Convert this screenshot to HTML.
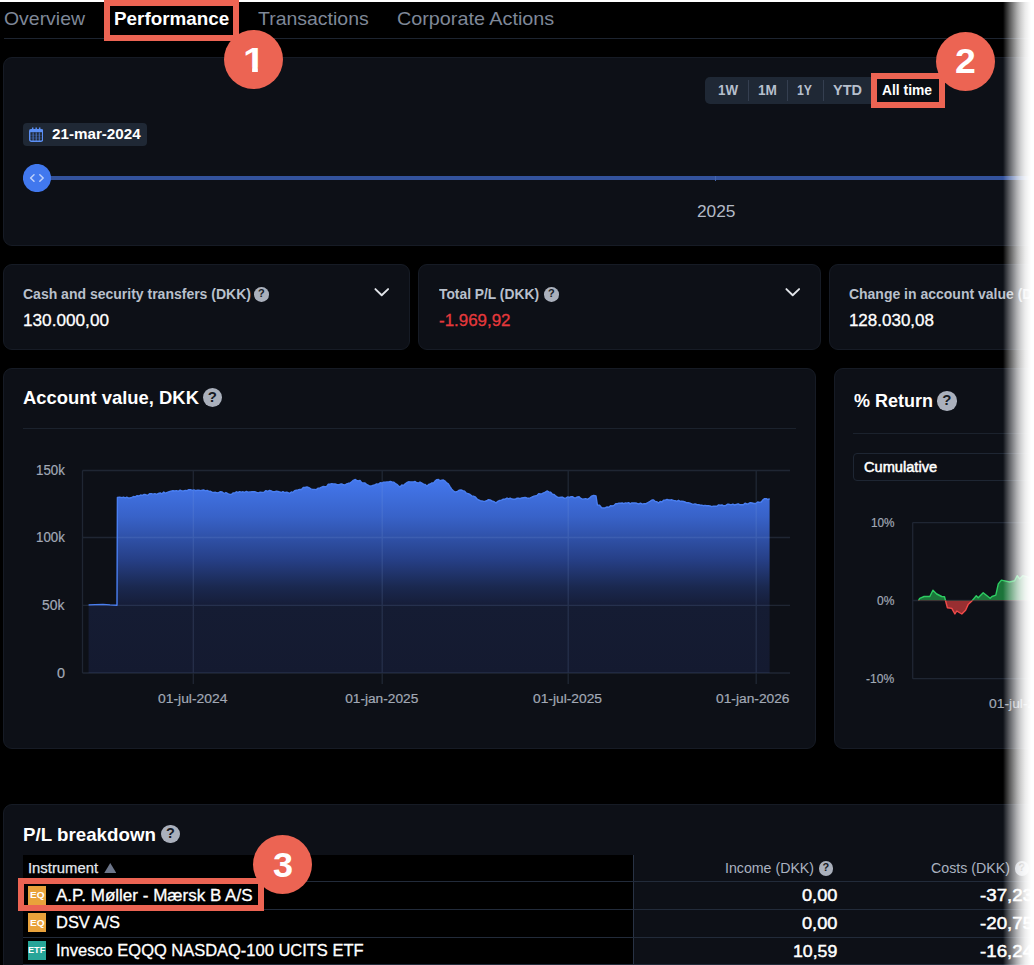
<!DOCTYPE html>
<html lang="en"><head><meta charset="utf-8"><title>Performance</title>
<style>
html,body{margin:0;padding:0;background:#000;}
body{width:1034px;height:965px;position:relative;overflow:hidden;font-family:"Liberation Sans",Arial,sans-serif;}
.t{position:absolute;white-space:nowrap;transform-origin:0 50%;}
.card{position:absolute;background:#0d1017;border:1px solid #161b25;border-radius:9px;box-sizing:border-box;}
.help{position:absolute;border-radius:50%;text-align:center;font-weight:700;}
.abs{position:absolute;}
.rbox{position:absolute;border:6px solid #ec6453;box-sizing:border-box;}
.num{position:absolute;border-radius:50%;background:#ec6453;}
.hl{position:absolute;height:1px;background:#1f2734;}
.vl{position:absolute;width:1px;background:#1f2734;}
</style></head><body>

<div class="abs" style="left:0;top:0;width:1034px;height:2px;background:#fff"></div>
<div class="abs" style="left:4px;top:38px;width:1030px;height:1px;background:#1d2430"></div>
<div class="t" style="left:4.00px;top:8.00px;font-size:19px;line-height:21px;color:#7f8898;transform:scaleX(1.0229);">Overview</div>
<div class="t" style="left:258.00px;top:8.00px;font-size:19px;line-height:21px;color:#7f8898;transform:scaleX(1.0244);">Transactions</div>
<div class="t" style="left:397.00px;top:8.00px;font-size:19px;line-height:21px;color:#7f8898;transform:scaleX(1.0408);">Corporate Actions</div>
<div class="card" style="left:3px;top:57px;width:1060px;height:189px"></div>
<div class="abs" style="left:704.6px;top:76.7px;width:236px;height:27.5px;border-radius:5px;background:#1f2835"></div>
<div class="abs" style="left:747.5px;top:80.2px;width:1px;height:20.6px;background:#353f50"></div>
<div class="abs" style="left:787.0px;top:80.2px;width:1px;height:20.6px;background:#353f50"></div>
<div class="abs" style="left:822.5px;top:80.2px;width:1px;height:20.6px;background:#353f50"></div>
<div class="t" style="left:717.50px;top:82.20px;font-size:14px;line-height:16px;color:#b6bfcc;font-weight:700;transform:scaleX(0.9524);">1W</div>
<div class="t" style="left:758.00px;top:82.20px;font-size:14px;line-height:16px;color:#b6bfcc;font-weight:700;transform:scaleX(0.9769);">1M</div>
<div class="t" style="left:797.00px;top:82.20px;font-size:14px;line-height:16px;color:#b6bfcc;font-weight:700;transform:scaleX(0.8759);">1Y</div>
<div class="t" style="left:833.00px;top:82.20px;font-size:14px;line-height:16px;color:#b6bfcc;font-weight:700;transform:scaleX(1.0357);">YTD</div>
<div class="abs" style="left:23px;top:122.5px;width:123.5px;height:23.5px;border-radius:4px;background:#1f2835"></div>
<svg class="abs" style="left:28.7px;top:126.8px" width="14.4" height="15" viewBox="0 0 14.4 15"><rect x="0.7" y="2.6" width="13" height="11.6" rx="1.6" fill="none" stroke="#5b8ff5" stroke-width="1.4"/><rect x="0.7" y="2.6" width="13" height="2.6" fill="#5b8ff5"/><path d="M3.7 0.4v3M7.2 0.4v3M10.7 0.4v3" stroke="#5b8ff5" stroke-width="1.5"/><path d="M4.1 5.5v8.4M7.2 5.5v8.4M10.3 5.5v8.4" stroke="#5b8ff5" stroke-width="1" opacity=".75"/><path d="M1 8.2h12.4M1 11h12.4" stroke="#5b8ff5" stroke-width="0.8" opacity=".35"/></svg>
<div class="t" style="left:52.00px;top:126.00px;font-size:14.6px;line-height:16px;color:#fff;font-weight:700;transform:scaleX(1.0407);">21-mar-2024</div>
<div class="abs" style="left:37px;top:175.7px;width:1000px;height:4.6px;background:#33529c"></div>
<div class="abs" style="left:715px;top:176px;width:1px;height:4.5px;background:#4464ad"></div>
<svg class="abs" style="left:23px;top:164px" width="28" height="28" viewBox="0 0 28 28"><circle cx="14" cy="14" r="14.1" fill="#4178ee"/><path d="M11 10.7 7.6 14 11 17.3M16.8 10.7 20.2 14 16.8 17.3" fill="none" stroke="#bdd0fa" stroke-width="1.5" stroke-linecap="round" stroke-linejoin="round"/></svg>
<div class="t" style="left:696.50px;top:203.00px;font-size:16px;line-height:17px;color:#b4bac6;transform:scaleX(1.0816);">2025</div>
<div class="card" style="left:3px;top:264px;width:407px;height:86px"></div>
<div class="card" style="left:418px;top:264px;width:403px;height:86px"></div>
<div class="card" style="left:829px;top:264px;width:240px;height:86px"></div>
<div class="t" style="left:23.00px;top:286.00px;font-size:14px;line-height:16px;color:#b9c0cc;font-weight:700;">Cash and security transfers (DKK)</div>
<div class="help" style="left:254.20px;top:287.00px;width:14.6px;height:14.6px;line-height:13.9px;font-size:11px;background:#aab0bc;color:#161a22">?</div>
<div class="t" style="left:23.00px;top:310.50px;font-size:17px;line-height:19px;color:#fff;transform:scaleX(1.0108);-webkit-text-stroke:0.3px #fff;">130.000,00</div>
<div class="t" style="left:439.20px;top:286.00px;font-size:14px;line-height:16px;color:#b9c0cc;font-weight:700;transform:scaleX(0.9865);">Total P/L (DKK)</div>
<div class="help" style="left:544.00px;top:287.00px;width:14.6px;height:14.6px;line-height:13.9px;font-size:11px;background:#aab0bc;color:#161a22">?</div>
<div class="t" style="left:439.00px;top:310.50px;font-size:17px;line-height:19px;color:#e5393c;transform:scaleX(0.9953);-webkit-text-stroke:0.3px #e5393c;">-1.969,92</div>
<div class="t" style="left:848.90px;top:286.00px;font-size:14px;line-height:16px;color:#b9c0cc;font-weight:700;">Change in account value (DKK)</div>
<div class="t" style="left:848.90px;top:310.50px;font-size:17px;line-height:19px;color:#fff;-webkit-text-stroke:0.3px #fff;">128.030,08</div>
<svg class="abs" style="left:373px;top:286px" width="18" height="13" viewBox="0 0 18 13"><path d="M2.4 3.1 8.7 9.3 15.1 3.1" fill="none" stroke="#e1e4e9" stroke-width="1.9" stroke-linecap="round" stroke-linejoin="round"/></svg>
<svg class="abs" style="left:783.8px;top:286px" width="18" height="13" viewBox="0 0 18 13"><path d="M2.4 3.1 8.7 9.3 15.1 3.1" fill="none" stroke="#e1e4e9" stroke-width="1.9" stroke-linecap="round" stroke-linejoin="round"/></svg>
<div class="card" style="left:3px;top:368px;width:812.6px;height:380.6px"></div>
<div class="t" style="left:23.00px;top:387.20px;font-size:18.6px;line-height:21px;color:#fff;font-weight:700;transform:scaleX(0.9901);">Account value, DKK</div>
<div class="help" style="left:202.50px;top:387.80px;width:19.6px;height:19.6px;line-height:18.0px;font-size:15px;background:#aab0bc;color:#161a22">?</div>
<div class="hl" style="left:23px;top:428px;width:773px;background:#1b222d"></div>
<svg class="abs" style="left:0;top:440px" width="830" height="280" viewBox="0 440 830 280">
<defs><linearGradient id="ag" gradientUnits="userSpaceOnUse" x1="0" y1="478" x2="0" y2="673"><stop offset="0" stop-color="#4478ee"/><stop offset="0.2" stop-color="#3862c8"/><stop offset="0.42" stop-color="#263f86"/><stop offset="0.56" stop-color="#1a284f"/><stop offset="0.645" stop-color="#161e3a"/><stop offset="0.66" stop-color="#151c33"/><stop offset="1" stop-color="#141a30"/></linearGradient></defs>
<path d="M88.6 604.9 L95.0 604.6 L103.0 604.4 L110.0 604.9 L117.0 605.2 L117.4 497.4 L119.7 497.2 L122.0 497.6 L123.6 497.1 L125.2 498.0 L126.8 497.1 L128.4 498.0 L130.0 498.0 L131.8 497.4 L133.5 496.5 L135.3 496.9 L137.1 495.7 L138.9 496.0 L140.6 495.0 L142.4 495.4 L144.2 494.4 L146.0 494.8 L147.8 495.3 L149.5 493.8 L151.3 493.7 L153.1 494.2 L154.9 493.7 L156.7 494.3 L158.4 493.5 L160.2 493.0 L162.0 493.8 L163.8 492.0 L165.5 493.2 L167.3 492.4 L169.2 491.7 L171.1 491.1 L172.9 490.7 L174.8 491.0 L176.6 490.6 L178.3 491.4 L180.1 490.2 L181.8 490.9 L183.6 491.0 L185.3 490.4 L187.1 490.7 L188.8 489.7 L190.6 489.7 L192.3 490.4 L194.0 489.9 L195.6 490.7 L197.3 490.3 L198.9 490.1 L200.6 490.6 L202.2 490.3 L203.9 490.0 L205.5 490.9 L207.2 490.4 L208.9 491.4 L210.5 491.3 L212.2 492.4 L213.9 492.5 L215.5 492.3 L217.2 492.9 L218.9 492.5 L220.5 491.7 L222.2 492.0 L224.1 493.5 L225.9 492.5 L227.8 493.7 L229.7 494.4 L231.4 494.4 L233.0 492.9 L234.7 493.0 L236.4 491.8 L238.0 492.5 L239.7 491.7 L241.4 492.2 L243.0 491.8 L244.7 492.4 L246.4 491.4 L248.0 492.1 L249.7 491.9 L251.4 491.8 L253.0 491.6 L254.7 491.7 L256.6 492.5 L258.4 492.9 L260.2 492.2 L262.1 492.4 L264.0 492.2 L265.9 490.6 L267.7 491.3 L269.6 490.4 L271.3 490.9 L272.9 491.8 L274.6 491.8 L276.3 491.1 L277.9 491.5 L279.6 492.0 L281.3 492.5 L282.9 491.6 L284.6 492.6 L286.3 492.3 L287.9 492.5 L289.6 493.4 L291.3 491.9 L292.9 492.5 L294.6 490.7 L296.3 490.3 L297.9 489.9 L299.6 489.4 L301.5 489.5 L303.3 487.4 L305.1 487.5 L307.0 487.0 L308.9 487.7 L310.8 488.9 L312.6 489.4 L314.5 489.4 L316.3 489.6 L318.2 488.1 L320.0 488.0 L321.7 487.2 L323.3 486.5 L325.0 486.8 L326.7 486.3 L328.3 484.2 L330.0 484.2 L331.7 483.7 L333.3 483.9 L335.0 484.0 L336.7 484.5 L338.3 484.8 L340.0 484.3 L341.7 483.9 L343.3 484.8 L345.0 485.0 L346.7 483.8 L348.3 483.3 L350.0 483.1 L351.7 481.7 L353.3 480.4 L355.0 479.5 L356.7 480.3 L358.3 481.0 L360.0 480.4 L361.7 482.6 L363.3 482.9 L365.0 483.0 L367.0 484.7 L369.0 485.7 L371.0 486.2 L372.8 485.5 L374.7 485.0 L376.5 483.9 L378.3 484.3 L380.2 482.7 L382.0 483.0 L383.7 482.1 L385.3 482.1 L387.0 481.9 L388.7 482.0 L390.3 481.4 L392.0 482.0 L393.6 482.1 L395.2 483.4 L396.8 484.3 L398.4 485.8 L400.0 487.0 L401.8 485.0 L403.5 485.4 L405.2 483.8 L407.0 482.5 L408.6 481.8 L410.2 481.9 L411.9 482.0 L413.5 482.0 L415.1 481.5 L416.8 482.8 L418.4 483.0 L420.0 482.0 L421.8 483.0 L423.5 484.1 L425.2 484.4 L427.0 486.2 L428.6 484.5 L430.3 484.0 L431.9 482.9 L433.6 483.0 L435.2 480.8 L436.9 479.6 L438.5 479.5 L440.1 480.7 L441.8 480.3 L443.4 480.0 L445.0 481.0 L446.7 482.9 L448.3 483.8 L450.0 486.6 L451.7 489.2 L453.3 490.8 L455.0 492.0 L457.0 491.7 L459.0 490.2 L461.0 490.0 L462.8 490.7 L464.6 491.2 L466.4 493.2 L468.2 493.7 L470.0 494.5 L471.7 495.9 L473.4 496.1 L475.1 496.8 L476.9 498.8 L478.6 500.0 L480.3 500.7 L482.0 501.0 L483.6 501.4 L485.2 501.2 L486.8 500.8 L488.4 499.7 L490.0 500.0 L492.0 501.0 L494.0 501.7 L496.0 503.0 L497.8 501.3 L499.7 500.5 L501.5 500.1 L503.3 499.2 L505.2 499.2 L507.0 498.0 L508.6 498.9 L510.2 498.1 L511.9 499.0 L513.5 499.2 L515.1 499.3 L516.8 498.3 L518.4 498.1 L520.0 498.7 L521.7 498.0 L523.4 497.7 L525.1 497.4 L526.9 498.0 L528.6 498.2 L530.3 497.9 L532.0 497.0 L533.7 496.3 L535.3 495.9 L537.0 495.5 L538.7 493.6 L540.3 494.0 L542.0 493.7 L543.7 492.8 L545.3 492.1 L547.0 491.0 L548.8 491.9 L550.6 492.3 L552.4 494.3 L554.1 494.4 L555.9 496.2 L557.7 497.4 L559.5 497.5 L561.2 497.3 L562.8 497.3 L564.5 498.3 L566.2 497.9 L567.8 496.9 L569.5 497.5 L571.1 496.7 L572.7 496.7 L574.3 497.9 L575.9 497.7 L577.5 497.0 L579.1 496.8 L580.8 498.4 L582.5 499.1 L584.1 498.9 L585.8 498.7 L587.4 499.4 L589.5 498.2 L591.6 496.1 L593.7 495.4 L596.0 496.0 L597.4 505.0 L599.5 505.1 L601.6 507.8 L603.7 508.0 L605.4 507.7 L607.1 507.0 L608.8 507.2 L610.5 505.7 L612.3 506.0 L614.0 505.4 L615.7 503.7 L617.4 503.7 L619.0 503.2 L620.6 503.2 L622.2 503.0 L623.8 503.6 L625.4 502.9 L627.0 503.2 L628.6 502.6 L630.2 503.9 L631.8 502.9 L633.4 503.0 L635.0 503.0 L636.8 503.3 L638.7 504.0 L640.5 503.2 L642.3 504.2 L644.2 503.6 L646.0 503.7 L648.0 502.5 L650.0 501.3 L652.0 500.0 L653.6 499.9 L655.2 501.4 L656.9 501.7 L658.5 503.0 L660.2 501.4 L661.9 502.1 L663.6 500.3 L665.3 500.1 L667.0 499.4 L668.6 500.0 L670.3 500.0 L671.9 499.8 L673.5 500.4 L675.2 500.7 L676.8 501.3 L678.5 500.3 L680.1 501.4 L681.7 501.1 L683.4 501.4 L685.0 502.0 L686.7 502.8 L688.3 502.7 L690.0 503.1 L691.7 503.8 L693.3 504.4 L695.0 503.9 L696.7 504.5 L698.3 504.7 L700.0 505.0 L701.7 505.2 L703.3 505.7 L705.0 505.4 L706.7 505.7 L708.3 505.8 L710.0 506.0 L711.7 506.7 L713.4 506.1 L715.1 506.2 L716.9 506.2 L718.6 504.9 L720.3 505.2 L722.0 505.0 L723.8 505.8 L725.6 505.6 L727.4 504.3 L729.2 504.3 L731.0 504.9 L732.8 504.2 L734.6 505.0 L736.3 504.3 L738.1 503.8 L739.8 504.7 L741.6 504.7 L743.3 504.7 L745.0 503.2 L746.8 504.0 L748.5 503.7 L750.3 502.6 L752.0 503.0 L753.9 503.5 L755.8 503.5 L757.7 502.0 L759.6 502.4 L761.3 502.0 L762.9 499.8 L764.6 498.7 L766.3 498.7 L767.9 499.6 L769.6 498.7 L769.6 673 L88.6 673 Z" fill="url(#ag)"/>
<path d="M82.5 470.5H790 M82.5 537.5H790 M82.5 605.3H790 M82.5 673H790 M82.5 470.5V673 M193.3 470.5V684 M382.2 470.5V684 M568.2 470.5V684 M756.2 470.5V684" stroke="#8fb0e6" stroke-width="1.3" fill="none" opacity="0.14"/>
<path d="M88.6 604.9 L95.0 604.6 L103.0 604.4 L110.0 604.9 L117.0 605.2 L117.4 497.4 L119.7 497.2 L122.0 497.6 L123.6 497.1 L125.2 498.0 L126.8 497.1 L128.4 498.0 L130.0 498.0 L131.8 497.4 L133.5 496.5 L135.3 496.9 L137.1 495.7 L138.9 496.0 L140.6 495.0 L142.4 495.4 L144.2 494.4 L146.0 494.8 L147.8 495.3 L149.5 493.8 L151.3 493.7 L153.1 494.2 L154.9 493.7 L156.7 494.3 L158.4 493.5 L160.2 493.0 L162.0 493.8 L163.8 492.0 L165.5 493.2 L167.3 492.4 L169.2 491.7 L171.1 491.1 L172.9 490.7 L174.8 491.0 L176.6 490.6 L178.3 491.4 L180.1 490.2 L181.8 490.9 L183.6 491.0 L185.3 490.4 L187.1 490.7 L188.8 489.7 L190.6 489.7 L192.3 490.4 L194.0 489.9 L195.6 490.7 L197.3 490.3 L198.9 490.1 L200.6 490.6 L202.2 490.3 L203.9 490.0 L205.5 490.9 L207.2 490.4 L208.9 491.4 L210.5 491.3 L212.2 492.4 L213.9 492.5 L215.5 492.3 L217.2 492.9 L218.9 492.5 L220.5 491.7 L222.2 492.0 L224.1 493.5 L225.9 492.5 L227.8 493.7 L229.7 494.4 L231.4 494.4 L233.0 492.9 L234.7 493.0 L236.4 491.8 L238.0 492.5 L239.7 491.7 L241.4 492.2 L243.0 491.8 L244.7 492.4 L246.4 491.4 L248.0 492.1 L249.7 491.9 L251.4 491.8 L253.0 491.6 L254.7 491.7 L256.6 492.5 L258.4 492.9 L260.2 492.2 L262.1 492.4 L264.0 492.2 L265.9 490.6 L267.7 491.3 L269.6 490.4 L271.3 490.9 L272.9 491.8 L274.6 491.8 L276.3 491.1 L277.9 491.5 L279.6 492.0 L281.3 492.5 L282.9 491.6 L284.6 492.6 L286.3 492.3 L287.9 492.5 L289.6 493.4 L291.3 491.9 L292.9 492.5 L294.6 490.7 L296.3 490.3 L297.9 489.9 L299.6 489.4 L301.5 489.5 L303.3 487.4 L305.1 487.5 L307.0 487.0 L308.9 487.7 L310.8 488.9 L312.6 489.4 L314.5 489.4 L316.3 489.6 L318.2 488.1 L320.0 488.0 L321.7 487.2 L323.3 486.5 L325.0 486.8 L326.7 486.3 L328.3 484.2 L330.0 484.2 L331.7 483.7 L333.3 483.9 L335.0 484.0 L336.7 484.5 L338.3 484.8 L340.0 484.3 L341.7 483.9 L343.3 484.8 L345.0 485.0 L346.7 483.8 L348.3 483.3 L350.0 483.1 L351.7 481.7 L353.3 480.4 L355.0 479.5 L356.7 480.3 L358.3 481.0 L360.0 480.4 L361.7 482.6 L363.3 482.9 L365.0 483.0 L367.0 484.7 L369.0 485.7 L371.0 486.2 L372.8 485.5 L374.7 485.0 L376.5 483.9 L378.3 484.3 L380.2 482.7 L382.0 483.0 L383.7 482.1 L385.3 482.1 L387.0 481.9 L388.7 482.0 L390.3 481.4 L392.0 482.0 L393.6 482.1 L395.2 483.4 L396.8 484.3 L398.4 485.8 L400.0 487.0 L401.8 485.0 L403.5 485.4 L405.2 483.8 L407.0 482.5 L408.6 481.8 L410.2 481.9 L411.9 482.0 L413.5 482.0 L415.1 481.5 L416.8 482.8 L418.4 483.0 L420.0 482.0 L421.8 483.0 L423.5 484.1 L425.2 484.4 L427.0 486.2 L428.6 484.5 L430.3 484.0 L431.9 482.9 L433.6 483.0 L435.2 480.8 L436.9 479.6 L438.5 479.5 L440.1 480.7 L441.8 480.3 L443.4 480.0 L445.0 481.0 L446.7 482.9 L448.3 483.8 L450.0 486.6 L451.7 489.2 L453.3 490.8 L455.0 492.0 L457.0 491.7 L459.0 490.2 L461.0 490.0 L462.8 490.7 L464.6 491.2 L466.4 493.2 L468.2 493.7 L470.0 494.5 L471.7 495.9 L473.4 496.1 L475.1 496.8 L476.9 498.8 L478.6 500.0 L480.3 500.7 L482.0 501.0 L483.6 501.4 L485.2 501.2 L486.8 500.8 L488.4 499.7 L490.0 500.0 L492.0 501.0 L494.0 501.7 L496.0 503.0 L497.8 501.3 L499.7 500.5 L501.5 500.1 L503.3 499.2 L505.2 499.2 L507.0 498.0 L508.6 498.9 L510.2 498.1 L511.9 499.0 L513.5 499.2 L515.1 499.3 L516.8 498.3 L518.4 498.1 L520.0 498.7 L521.7 498.0 L523.4 497.7 L525.1 497.4 L526.9 498.0 L528.6 498.2 L530.3 497.9 L532.0 497.0 L533.7 496.3 L535.3 495.9 L537.0 495.5 L538.7 493.6 L540.3 494.0 L542.0 493.7 L543.7 492.8 L545.3 492.1 L547.0 491.0 L548.8 491.9 L550.6 492.3 L552.4 494.3 L554.1 494.4 L555.9 496.2 L557.7 497.4 L559.5 497.5 L561.2 497.3 L562.8 497.3 L564.5 498.3 L566.2 497.9 L567.8 496.9 L569.5 497.5 L571.1 496.7 L572.7 496.7 L574.3 497.9 L575.9 497.7 L577.5 497.0 L579.1 496.8 L580.8 498.4 L582.5 499.1 L584.1 498.9 L585.8 498.7 L587.4 499.4 L589.5 498.2 L591.6 496.1 L593.7 495.4 L596.0 496.0 L597.4 505.0 L599.5 505.1 L601.6 507.8 L603.7 508.0 L605.4 507.7 L607.1 507.0 L608.8 507.2 L610.5 505.7 L612.3 506.0 L614.0 505.4 L615.7 503.7 L617.4 503.7 L619.0 503.2 L620.6 503.2 L622.2 503.0 L623.8 503.6 L625.4 502.9 L627.0 503.2 L628.6 502.6 L630.2 503.9 L631.8 502.9 L633.4 503.0 L635.0 503.0 L636.8 503.3 L638.7 504.0 L640.5 503.2 L642.3 504.2 L644.2 503.6 L646.0 503.7 L648.0 502.5 L650.0 501.3 L652.0 500.0 L653.6 499.9 L655.2 501.4 L656.9 501.7 L658.5 503.0 L660.2 501.4 L661.9 502.1 L663.6 500.3 L665.3 500.1 L667.0 499.4 L668.6 500.0 L670.3 500.0 L671.9 499.8 L673.5 500.4 L675.2 500.7 L676.8 501.3 L678.5 500.3 L680.1 501.4 L681.7 501.1 L683.4 501.4 L685.0 502.0 L686.7 502.8 L688.3 502.7 L690.0 503.1 L691.7 503.8 L693.3 504.4 L695.0 503.9 L696.7 504.5 L698.3 504.7 L700.0 505.0 L701.7 505.2 L703.3 505.7 L705.0 505.4 L706.7 505.7 L708.3 505.8 L710.0 506.0 L711.7 506.7 L713.4 506.1 L715.1 506.2 L716.9 506.2 L718.6 504.9 L720.3 505.2 L722.0 505.0 L723.8 505.8 L725.6 505.6 L727.4 504.3 L729.2 504.3 L731.0 504.9 L732.8 504.2 L734.6 505.0 L736.3 504.3 L738.1 503.8 L739.8 504.7 L741.6 504.7 L743.3 504.7 L745.0 503.2 L746.8 504.0 L748.5 503.7 L750.3 502.6 L752.0 503.0 L753.9 503.5 L755.8 503.5 L757.7 502.0 L759.6 502.4 L761.3 502.0 L762.9 499.8 L764.6 498.7 L766.3 498.7 L767.9 499.6 L769.6 498.7" fill="none" stroke="#4a7ff2" stroke-width="1.4" stroke-linejoin="round"/>
</svg>
<div class="t" style="left:35.80px;top:462.20px;font-size:14.2px;line-height:16px;color:#a2a9b6;transform:scaleX(0.9353);-webkit-text-stroke:0.2px #a2a9b6;">150k</div>
<div class="t" style="left:35.80px;top:529.20px;font-size:14.2px;line-height:16px;color:#a2a9b6;transform:scaleX(0.9353);-webkit-text-stroke:0.2px #a2a9b6;">100k</div>
<div class="t" style="left:42.20px;top:597.00px;font-size:14.2px;line-height:16px;color:#a2a9b6;transform:scaleX(0.9784);-webkit-text-stroke:0.2px #a2a9b6;">50k</div>
<div class="t" style="left:56.60px;top:664.80px;font-size:14.2px;line-height:16px;color:#a2a9b6;transform:scaleX(1.0130);-webkit-text-stroke:0.2px #a2a9b6;">0</div>
<div class="t" style="left:158.40px;top:691.00px;font-size:13.7px;line-height:15px;color:#a2a9b6;transform:scaleX(1.0139);-webkit-text-stroke:0.2px #a2a9b6;">01-jul-2024</div>
<div class="t" style="left:345.20px;top:691.00px;font-size:13.7px;line-height:15px;color:#a2a9b6;-webkit-text-stroke:0.2px #a2a9b6;">01-jan-2025</div>
<div class="t" style="left:532.80px;top:691.00px;font-size:13.7px;line-height:15px;color:#a2a9b6;transform:scaleX(1.0080);-webkit-text-stroke:0.2px #a2a9b6;">01-jul-2025</div>
<div class="t" style="left:716.40px;top:691.00px;font-size:13.7px;line-height:15px;color:#a2a9b6;transform:scaleX(1.0065);-webkit-text-stroke:0.2px #a2a9b6;">01-jan-2026</div>
<div class="card" style="left:833.5px;top:368px;width:240px;height:380.6px"></div>
<div class="t" style="left:854.00px;top:390.00px;font-size:18.6px;line-height:21px;color:#fff;font-weight:700;transform:scaleX(0.9677);">% Return</div>
<div class="help" style="left:937.00px;top:391.20px;width:19.6px;height:19.6px;line-height:18.0px;font-size:15px;background:#aab0bc;color:#161a22">?</div>
<div class="hl" style="left:853px;top:433px;width:200px;background:#1b222d"></div>
<div class="abs" style="left:853px;top:453px;width:220px;height:27.6px;box-sizing:border-box;border:1px solid #1e2633;border-radius:4px"></div>
<div class="t" style="left:863.50px;top:458.90px;font-size:14px;line-height:16px;color:#fff;transform:scaleX(1.0438);-webkit-text-stroke:0.5px #fff;">Cumulative</div>
<svg class="abs" style="left:834px;top:500px" width="200" height="230" viewBox="834 500 200 230">
<defs><clipPath id="cu"><rect x="834" y="500" width="200" height="100.5"/></clipPath><clipPath id="cd"><rect x="834" y="600.5" width="200" height="130"/></clipPath></defs>
<path d="M912.7 522.6H1034M912.7 600.5H1034M912.7 678.7H1034M912.7 522.6V678.7" stroke="#8fb0e6" stroke-width="1.3" fill="none" opacity="0.14"/>
<g clip-path="url(#cu)"><path d="M918.5 600.5 L919.7 598.3 L924.1 596.5 L929.8 596.5 L932.9 590.2 L936.7 594.0 L941.7 596.5 L944.5 596.7 L945.5 600.5 L947.4 607.8 L951.8 608.4 L954.9 614.0 L956.8 611.0 L961.8 614.0 L965.6 610.3 L968.1 604.6 L971.9 600.9 L976.3 595.8 L978.2 597.7 L983.2 592.7 L987.0 595.8 L990.1 598.3 L992.0 596.5 L995.8 595.2 L998.3 583.9 L1001.4 580.1 L1009.6 582.0 L1014.6 580.7 L1017.2 575.7 L1019.7 578.9 L1022.8 575.7 L1029.7 577.6 L1040.0 576.0 L1040 600.5 L918.5 600.5 Z" fill="#1c743a"/><path d="M918.5 600.5 L919.7 598.3 L924.1 596.5 L929.8 596.5 L932.9 590.2 L936.7 594.0 L941.7 596.5 L944.5 596.7 L945.5 600.5 L947.4 607.8 L951.8 608.4 L954.9 614.0 L956.8 611.0 L961.8 614.0 L965.6 610.3 L968.1 604.6 L971.9 600.9 L976.3 595.8 L978.2 597.7 L983.2 592.7 L987.0 595.8 L990.1 598.3 L992.0 596.5 L995.8 595.2 L998.3 583.9 L1001.4 580.1 L1009.6 582.0 L1014.6 580.7 L1017.2 575.7 L1019.7 578.9 L1022.8 575.7 L1029.7 577.6 L1040.0 576.0" fill="none" stroke="#2dcc62" stroke-width="1.4" stroke-linejoin="round"/></g>
<g clip-path="url(#cd)"><path d="M918.5 600.5 L919.7 598.3 L924.1 596.5 L929.8 596.5 L932.9 590.2 L936.7 594.0 L941.7 596.5 L944.5 596.7 L945.5 600.5 L947.4 607.8 L951.8 608.4 L954.9 614.0 L956.8 611.0 L961.8 614.0 L965.6 610.3 L968.1 604.6 L971.9 600.9 L976.3 595.8 L978.2 597.7 L983.2 592.7 L987.0 595.8 L990.1 598.3 L992.0 596.5 L995.8 595.2 L998.3 583.9 L1001.4 580.1 L1009.6 582.0 L1014.6 580.7 L1017.2 575.7 L1019.7 578.9 L1022.8 575.7 L1029.7 577.6 L1040.0 576.0 L1040 600.5 L918.5 600.5 Z" fill="#982f31"/><path d="M918.5 600.5 L919.7 598.3 L924.1 596.5 L929.8 596.5 L932.9 590.2 L936.7 594.0 L941.7 596.5 L944.5 596.7 L945.5 600.5 L947.4 607.8 L951.8 608.4 L954.9 614.0 L956.8 611.0 L961.8 614.0 L965.6 610.3 L968.1 604.6 L971.9 600.9 L976.3 595.8 L978.2 597.7 L983.2 592.7 L987.0 595.8 L990.1 598.3 L992.0 596.5 L995.8 595.2 L998.3 583.9 L1001.4 580.1 L1009.6 582.0 L1014.6 580.7 L1017.2 575.7 L1019.7 578.9 L1022.8 575.7 L1029.7 577.6 L1040.0 576.0" fill="none" stroke="#f04a4a" stroke-width="1.4" stroke-linejoin="round"/></g>
</svg>
<div class="t" style="left:871.00px;top:514.60px;font-size:13.7px;line-height:15px;color:#a2a9b6;transform:scaleX(0.8607);-webkit-text-stroke:0.2px #a2a9b6;">10%</div>
<div class="t" style="left:877.20px;top:593.00px;font-size:13.7px;line-height:15px;color:#a2a9b6;transform:scaleX(0.8788);-webkit-text-stroke:0.2px #a2a9b6;">0%</div>
<div class="t" style="left:866.40px;top:671.30px;font-size:13.7px;line-height:15px;color:#a2a9b6;transform:scaleX(0.8817);-webkit-text-stroke:0.2px #a2a9b6;">-10%</div>
<div class="t" style="left:989.10px;top:696.30px;font-size:13.7px;line-height:15px;color:#a2a9b6;transform:scaleX(1.0139);-webkit-text-stroke:0.2px #a2a9b6;">01-jul-2024</div>
<div class="card" style="left:3px;top:804px;width:1060px;height:200px"></div>
<div class="t" style="left:23.00px;top:824.00px;font-size:18.4px;line-height:21px;color:#fff;font-weight:700;transform:scaleX(1.0189);">P/L breakdown</div>
<div class="help" style="left:161.20px;top:824.70px;width:18.6px;height:18.6px;line-height:17.0px;font-size:14.5px;background:#aab0bc;color:#161a22">?</div>
<div class="abs" style="left:23px;top:854.5px;width:610px;height:120px;background:#000"></div>
<div class="vl" style="left:633px;top:854.5px;height:120px;background:#283244"></div>
<div class="hl" style="left:23px;top:881.1px;width:1020px;background:#222b3a"></div>
<div class="hl" style="left:23px;top:908.8px;width:1020px;background:#222b3a"></div>
<div class="hl" style="left:23px;top:936.5px;width:1020px;background:#222b3a"></div>
<div class="hl" style="left:23px;top:963.9px;width:1020px;background:#222b3a"></div>
<div class="t" style="left:28.00px;top:860.00px;font-size:14.5px;line-height:16px;color:#e4e7ed;transform:scaleX(1.0219);-webkit-text-stroke:0.25px #e4e7ed;">Instrument</div>
<svg class="abs" style="left:103.5px;top:862.6px" width="12.5" height="10.4" viewBox="0 0 12 10"><path d="M6 0 12 10H0Z" fill="#6d768a"/></svg>
<div class="t" style="left:724.75px;top:860.20px;font-size:14.5px;line-height:16px;color:#aab2c0;transform:scaleX(0.9780);">Income (DKK)</div>
<div class="help" style="left:818.50px;top:861.30px;width:14.6px;height:14.6px;line-height:13.9px;font-size:11px;background:#aab0bc;color:#161a22">?</div>
<div class="t" style="left:930.80px;top:860.20px;font-size:14.5px;line-height:16px;color:#aab2c0;transform:scaleX(0.9793);">Costs (DKK)</div>
<div class="help" style="left:1014.50px;top:861.30px;width:14.6px;height:14.6px;line-height:13.9px;font-size:11px;background:#aab0bc;color:#161a22">?</div>
<div class="abs" style="left:27.5px;top:886px;width:18.5px;height:18.5px;background:#e9a23b"></div>
<div class="t" style="left:30.00px;top:890.10px;font-size:9.2px;line-height:10px;color:#fff;font-weight:700;transform:scaleX(1.0908);">EQ</div>
<div class="t" style="left:55.50px;top:886.50px;font-size:16px;line-height:17px;color:#fff;transform:scaleX(1.0643);-webkit-text-stroke:0.3px #fff;">A.P. Møller - Mærsk B A/S</div>
<div class="t" style="left:801.60px;top:886.10px;font-size:16.4px;line-height:18px;color:#fff;transform:scaleX(1.1090);-webkit-text-stroke:0.45px #fff;">0,00</div>
<div class="t" style="left:980.30px;top:886.10px;font-size:16.4px;line-height:18px;color:#fff;transform:scaleX(1.1440);-webkit-text-stroke:0.45px #fff;">-37,23</div>
<div class="abs" style="left:27.5px;top:913.2px;width:18.5px;height:18.5px;background:#e9a23b"></div>
<div class="t" style="left:30.00px;top:917.90px;font-size:9.2px;line-height:10px;color:#fff;font-weight:700;transform:scaleX(1.0908);">EQ</div>
<div class="t" style="left:55.50px;top:914.30px;font-size:16px;line-height:17px;color:#fff;transform:scaleX(1.0281);-webkit-text-stroke:0.3px #fff;">DSV A/S</div>
<div class="t" style="left:801.60px;top:913.90px;font-size:16.4px;line-height:18px;color:#fff;transform:scaleX(1.1090);-webkit-text-stroke:0.45px #fff;">0,00</div>
<div class="t" style="left:980.30px;top:913.90px;font-size:16.4px;line-height:18px;color:#fff;transform:scaleX(1.1440);-webkit-text-stroke:0.45px #fff;">-20,75</div>
<div class="abs" style="left:27.5px;top:941px;width:18.5px;height:18.5px;background:#27a598"></div>
<div class="t" style="left:28.30px;top:945.40px;font-size:8.4px;line-height:10px;color:#fff;font-weight:700;transform:scaleX(1.0904);">ETF</div>
<div class="t" style="left:55.50px;top:942.00px;font-size:16px;line-height:17px;color:#fff;transform:scaleX(1.0293);-webkit-text-stroke:0.3px #fff;">Invesco EQQQ NASDAQ-100 UCITS ETF</div>
<div class="t" style="left:792.70px;top:941.60px;font-size:16.4px;line-height:18px;color:#fff;transform:scaleX(1.0794);-webkit-text-stroke:0.45px #fff;">10,59</div>
<div class="t" style="left:980.30px;top:941.60px;font-size:16.4px;line-height:18px;color:#fff;transform:scaleX(1.1440);-webkit-text-stroke:0.45px #fff;">-16,24</div>
<div class="rbox" style="left:104px;top:0px;width:135px;height:41px;background:#000"></div>
<div class="t" style="left:113.80px;top:8.00px;font-size:19px;line-height:21px;color:#fff;font-weight:700;transform:scaleX(0.9917);">Performance</div>
<div class="rbox" style="left:871.2px;top:73.2px;width:73.9px;height:34.8px;background:#0a0d13"></div>
<div class="t" style="left:882.00px;top:82.20px;font-size:14px;line-height:16px;color:#fff;font-weight:700;transform:scaleX(0.9888);">All time</div>
<div class="rbox" style="left:17.5px;top:878px;width:246.6px;height:32.6px"></div>
<div class="num" style="left:224.0px;top:30.0px;width:59.2px;height:59.2px"></div>
<div class="t" style="left:242.60px;top:39.80px;font-size:35px;line-height:39px;color:#fff;font-weight:700;transform:scaleX(1.14);clip-path:polygon(0 0,1em 0,1em .79em,.372em .79em,.372em 1.2em,.228em 1.2em,.228em .79em,0 .79em);">1</div>
<div class="num" style="left:936.1px;top:31.5px;width:59.2px;height:59.2px"></div>
<div class="t" style="left:955.00px;top:41.40px;font-size:35px;line-height:39px;color:#fff;font-weight:700;transform:scaleX(1.07);">2</div>
<div class="num" style="left:252.9px;top:834.7px;width:59.2px;height:59.2px"></div>
<div class="t" style="left:272.90px;top:844.80px;font-size:35px;line-height:39px;color:#fff;font-weight:700;transform:scaleX(1.03);">3</div>
<div class="abs" style="left:1003px;top:0;width:31px;height:965px;background:linear-gradient(90deg,rgba(255,255,255,0) 0px,rgba(255,255,255,.14) 2.5px,rgba(255,255,255,.32) 6px,rgba(255,255,255,.5) 10px,rgba(255,255,255,.68) 14px,rgba(255,255,255,.82) 18px,rgba(255,255,255,.92) 22px,rgba(255,255,255,.98) 26px,#fff 28.5px)"></div>
</body></html>
